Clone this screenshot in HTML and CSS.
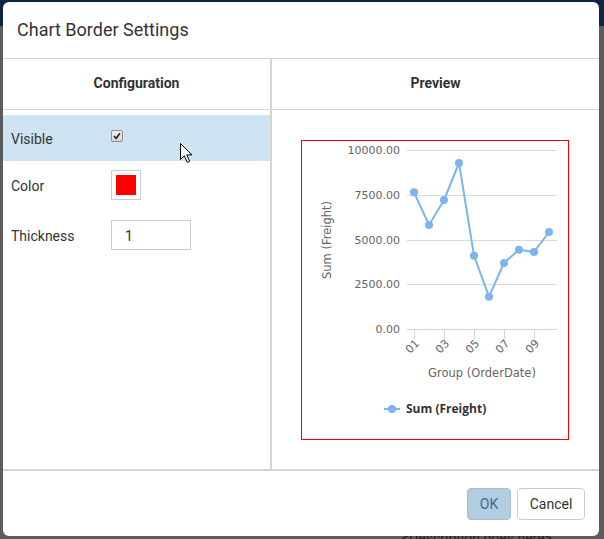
FILE: index.html
```html
<!DOCTYPE html>
<html>
<head>
<meta charset="utf-8">
<title>Chart Border Settings</title>
<link rel="stylesheet" href="styles.css">
</head>
<body>
<div class="page">
  <div class="page-desc">&lt;Description goes here&gt;</div>
</div>
<div class="modal">
  <div class="modal-header">Chart Border Settings</div>
  <div class="panels">
    <div class="panel panel-config">
      <div class="panel-head">Configuration</div>
      <div class="config-body">
        <div class="row row-visible">
          <span class="label">Visible</span>
          <span class="checkbox"><svg width="8" height="8" viewBox="0 0 8 8"><path d="M1 4.2 L3.1 6.3 L7 1.2" fill="none" stroke="#333" stroke-width="1.8"/></svg></span>
        </div>
        <div class="row row-color">
          <span class="label">Color</span>
          <span class="swatch"><span class="swatch-fill"></span></span>
        </div>
        <div class="row row-thick">
          <span class="label">Thickness</span>
          <input class="num" type="text" value="1">
        </div>
      </div>
    </div>
    <div class="panel panel-preview">
      <div class="panel-head">Preview</div>
      <div class="preview-body">
        <div class="chart-frame">
          <svg class="chart" width="266" height="298" viewBox="303 141 266 298">
            <g class="grid">
              <line x1="408" y1="150.5" x2="558" y2="150.5"/>
              <line x1="408" y1="195.5" x2="558" y2="195.5"/>
              <line x1="408" y1="240.5" x2="558" y2="240.5"/>
              <line x1="408" y1="284.5" x2="558" y2="284.5"/>
            </g>
            <g class="axis">
              <line x1="408" y1="329.5" x2="558" y2="329.5"/>
              <line x1="415.5" y1="329" x2="415.5" y2="339"/>
              <line x1="445.5" y1="329" x2="445.5" y2="339"/>
              <line x1="475.5" y1="329" x2="475.5" y2="339"/>
              <line x1="505.5" y1="329" x2="505.5" y2="339"/>
              <line x1="535.5" y1="329" x2="535.5" y2="339"/>
            </g>
            <g class="ylabels">
              <text x="401" y="154">10000.00</text>
              <text x="401" y="199">7500.00</text>
              <text x="401" y="244">5000.00</text>
              <text x="401" y="288">2500.00</text>
              <text x="401" y="333">0.00</text>
            </g>
            <g class="xlabels">
              <text transform="translate(421 344) rotate(-45)">01</text>
              <text transform="translate(451 344) rotate(-45)">03</text>
              <text transform="translate(481 344) rotate(-45)">05</text>
              <text transform="translate(511 344) rotate(-45)">07</text>
              <text transform="translate(541 344) rotate(-45)">09</text>
            </g>
            <text class="axis-title" transform="translate(332 240) rotate(-90)">Sum (Freight)</text>
            <text class="axis-title" x="483" y="377">Group (OrderDate)</text>
            <polyline class="series" points="415,192.3 430,225 445,200 460,163 475,255.7 490,296.7 505,263 520,249.7 535,252 550,232"/>
            <g class="markers">
              <circle cx="415" cy="192.3" r="4"/>
              <circle cx="430" cy="225" r="4"/>
              <circle cx="445" cy="200" r="4"/>
              <circle cx="460" cy="163" r="4"/>
              <circle cx="475" cy="255.7" r="4"/>
              <circle cx="490" cy="296.7" r="4"/>
              <circle cx="505" cy="263" r="4"/>
              <circle cx="520" cy="249.7" r="4"/>
              <circle cx="535" cy="252" r="4"/>
              <circle cx="550" cy="232" r="4"/>
            </g>
            <line class="series" x1="385" y1="409" x2="401" y2="409"/>
            <circle class="legend-dot" cx="393" cy="409" r="4"/>
            <text class="legend-text" x="407" y="413">Sum (Freight)</text>
          </svg>
        </div>
      </div>
    </div>
  </div>
  <div class="modal-footer">
    <button class="btn btn-ok" type="button">OK</button>
    <button class="btn btn-cancel" type="button">Cancel</button>
  </div>
</div>
<svg class="cursor" width="14" height="21" viewBox="0 0 14 21"><path d="M0.5 0.5 L0.5 16.5 L4.3 12.8 L7.2 19.3 L9.6 18.3 L6.8 11.9 L12 11.9 Z" fill="#fff" stroke="#000" stroke-width="1" stroke-linejoin="round"/></svg>
</body>
</html>
```
FILE: styles.css
```css
html, body {
  margin: 0;
  padding: 0;
}

body {
  width: 604px;
  height: 539px;
  overflow: hidden;
  background: linear-gradient(#0f2444 0, #0f2444 26px, #5c5c5c 26px, #5c5c5c 100%);
  font-family: Roboto, "Liberation Sans", Arial, sans-serif;
  color: #333;
}

.page {
  box-sizing: border-box;
  height: 539px;
  padding: 530px 0 0 402px;
}

.page-desc {
  font-size: 14px;
  line-height: 16px;
  color: #222;
}

.modal {
  position: absolute;
  left: 3px;
  top: 2px;
  width: 596px;
  height: 534px;
  background: #fff;
  border-radius: 6px;
  display: flex;
  flex-direction: column;
  overflow: hidden;
}

.modal-header {
  height: 56px;
  box-sizing: border-box;
  padding: 0 0 2px 14px;
  display: flex;
  align-items: center;
  font-size: 18px;
  color: #333;
}

.panels {
  height: 413px;
  box-sizing: border-box;
  display: grid;
  grid-template-columns: 269px 1fr;
  border-top: 1px solid #d4d4d4;
  border-bottom: 2px solid #d4d4d4;
}

.panel-config {
  border-right: 2px solid #d4d4d4;
}

.panel-head {
  height: 51px;
  box-sizing: border-box;
  padding-bottom: 2px;
  border-bottom: 1px solid #d4d4d4;
  display: flex;
  align-items: center;
  justify-content: center;
  font-size: 14px;
  font-weight: bold;
  color: #333;
}

.config-body {
  padding-top: 5px;
}

.row {
  display: flex;
  align-items: center;
  padding-left: 8px;
  height: 46px;
}

.row-visible {
  background: #cfe4f2;
}

.row-color {
  height: 47px;
}

.row-thick {
  height: 53px;
}

.label {
  width: 100px;
  padding-top: 2px;
  font-size: 14px;
  color: #333;
}

.checkbox {
  box-sizing: border-box;
  width: 12px;
  height: 12px;
  margin-bottom: 5px;
  border: 1px solid #8f8f8f;
  border-radius: 2px;
  background: linear-gradient(#f0f0f0, #d6d6d6);
  display: flex;
  align-items: center;
  justify-content: center;
}

.checkbox svg {
  display: block;
}

.swatch {
  box-sizing: border-box;
  width: 30px;
  height: 30px;
  padding: 4px;
  border: 1px solid #cccccc;
}

.swatch-fill {
  display: block;
  width: 20px;
  height: 20px;
  background: #ff0000;
}

.num {
  box-sizing: border-box;
  width: 80px;
  height: 30px;
  margin: 0;
  padding: 2px 13px 0;
  border: 1px solid #cccccc;
  border-radius: 0;
  font-family: Roboto, "Liberation Sans", Arial, sans-serif;
  font-size: 14px;
  color: #333;
  outline: none;
}

.preview-body {
  padding: 30px 0 0 29px;
}

.chart-frame {
  width: 266px;
  height: 298px;
  border: 1px solid #ff0000;
}

.chart {
  display: block;
  font-family: "DejaVu Sans", Verdana, sans-serif;
}

.grid line {
  stroke: #dadada;
  stroke-width: 1;
}

.axis line {
  stroke: #ccd6eb;
  stroke-width: 1;
}

.ylabels text {
  font-size: 11px;
  fill: #666;
  text-anchor: end;
}

.xlabels text {
  font-size: 11px;
  fill: #666;
  text-anchor: end;
}

.axis-title {
  font-size: 11.5px;
  fill: #666;
  text-anchor: middle;
}

.series {
  fill: none;
  stroke: #7cb5ec;
  stroke-width: 2;
  stroke-linejoin: round;
}

.markers circle,
.legend-dot {
  fill: #7cb5ec;
}

.legend-text {
  font-family: "Open Sans", "DejaVu Sans", sans-serif;
  font-size: 12px;
  font-weight: bold;
  fill: #333;
}

.modal-footer {
  flex: 1;
  display: flex;
  justify-content: flex-end;
  align-items: center;
  gap: 6px;
  padding-right: 14px;
}

.btn {
  box-sizing: border-box;
  height: 32px;
  margin: 0;
  padding: 0;
  border-radius: 4px;
  font-family: Roboto, "Liberation Sans", Arial, sans-serif;
  font-size: 14px;
}

.btn-ok {
  width: 44px;
  background: #b3cde0;
  border: 1px solid #a3c0d6;
  color: #3d6b99;
}

.btn-cancel {
  width: 68px;
  background: #fff;
  border: 1px solid #cccccc;
  color: #333;
}

.cursor {
  position: absolute;
  left: 180px;
  top: 143px;
}
```
